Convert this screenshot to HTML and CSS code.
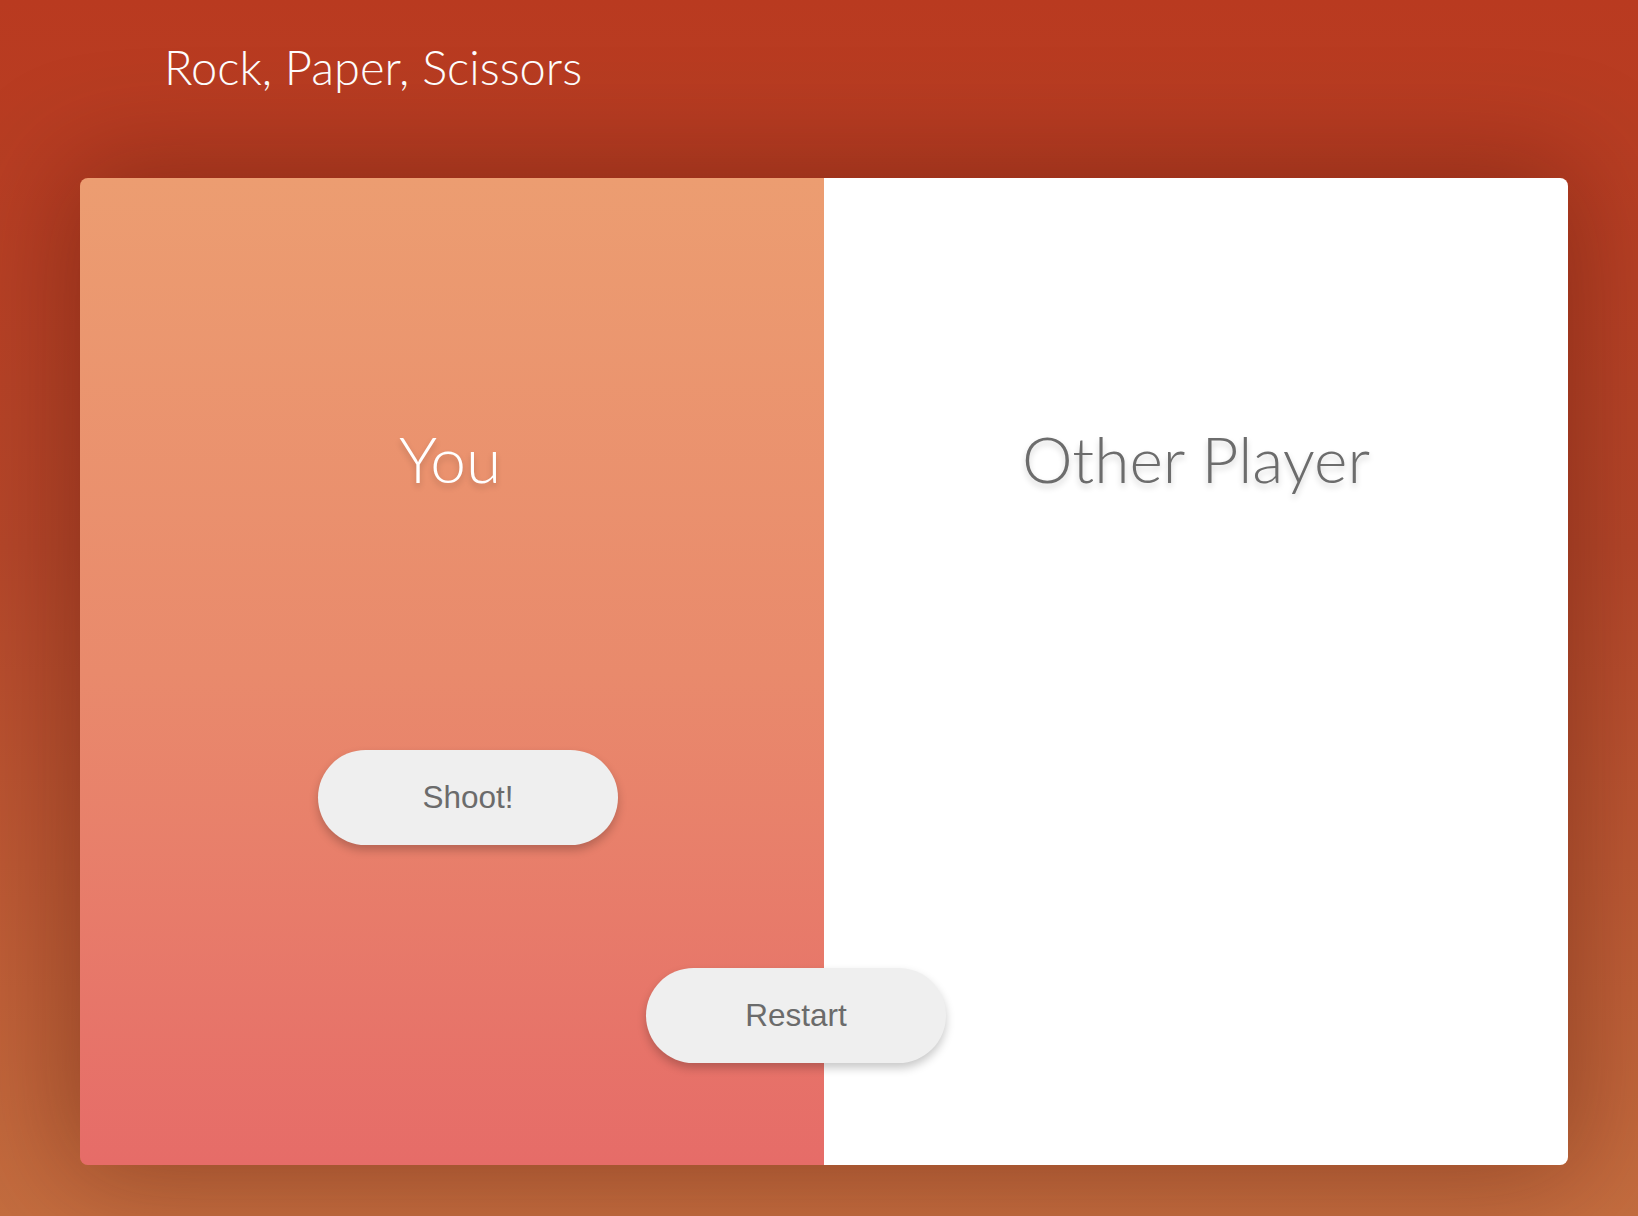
FILE: index.html
```html
<!DOCTYPE html>
<html lang="en">
<head>
<meta charset="utf-8">
<title>Rock, Paper, Scissors</title>
<link rel="stylesheet" href="styles.css">
</head>
<body>
<header class="header">
  <h1 class="title">Rock, Paper, Scissors</h1>
</header>
<main class="board">
  <section class="player player-you">
    <h2 class="player-name">You</h2>
    <button class="btn btn-shoot" type="button">Shoot!</button>
  </section>
  <section class="player player-other">
    <h2 class="player-name">Other Player</h2>
  </section>
  <button class="btn btn-restart" type="button">Restart</button>
</main>
</body>
</html>
```

FILE: styles.css
```css
html, body {
  margin: 0;
  padding: 0;
}

body {
  width: 1638px;
  height: 1216px;
  overflow: hidden;
  background: linear-gradient(180deg, #b93a20 0%, #b5472a 45%, #c46d3f 100%);
  font-family: Lato, "Open Sans", sans-serif;
  display: flex;
  flex-direction: column;
}

.header {
  padding: 39px 0 0 164px;
  height: 178px;
  flex: none;
  box-sizing: border-box;
}

.title {
  margin: 0;
  font-family: Lato, sans-serif;
  font-weight: 300;
  font-size: 47px;
  line-height: 1.2;
  color: #ffffff;
}

.board {
  position: relative;
  flex: none;
  margin-left: 80px;
  width: 1488px;
  height: 987px;
  border-radius: 8px;
  display: grid;
  grid-template-columns: 744px 744px;
  overflow: hidden;
  box-shadow: 0 0 110px 10px rgba(60, 10, 0, 0.35);
}

.player {
  display: flex;
  flex-direction: column;
  padding-top: 243px;
}

.player-you {
  background: linear-gradient(180deg, #ec9d71 0%, #e98a6c 50%, #e66c68 100%);
}

.player-other {
  background: #ffffff;
}

.player-name {
  margin: 0;
  font-family: Lato, sans-serif;
  font-weight: 300;
  font-size: 64px;
  line-height: 1.2;
  text-align: center;
  text-shadow: 0 4px 6px rgba(0, 0, 0, 0.18);
}

.player-you .player-name {
  color: #ffffff;
  padding-right: 4px;
}

.player-other .player-name {
  color: #6c6c6c;
}

.btn {
  width: 300px;
  height: 95px;
  border: none;
  border-radius: 48px;
  background: #efefef;
  color: #6b6b6b;
  font-family: "Liberation Sans", Arial, sans-serif;
  font-size: 31.5px;
  padding: 0;
  box-shadow: 0 5px 10px rgba(0, 0, 0, 0.22);
  cursor: pointer;
}

.btn-shoot {
  align-self: flex-start;
  margin-top: 252px;
  margin-left: 238px;
}

.btn-restart {
  position: absolute;
  left: 566px;
  top: 790px;
}
```
